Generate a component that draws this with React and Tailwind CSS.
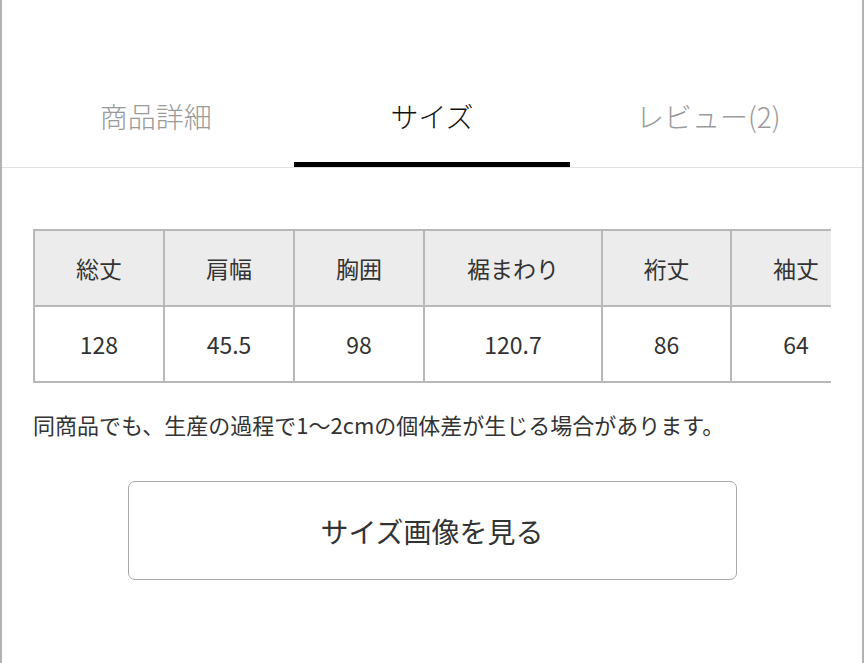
import React from "react";

const headers = ["総丈", "肩幅", "胸囲", "裾まわり", "裄丈", "袖丈"];
const values = ["128", "45.5", "98", "120.7", "86", "64"];
const widths = ["w-[130px]", "w-[130px]", "w-[130px]", "w-[178px]", "w-[129px]", "w-[130px]"];

export default function App() {
  return (
    <div
      className="w-[864px] h-[663px] bg-white border-x-2 border-[#b3b3b3] overflow-hidden"
      style={{ fontFamily: '"Noto Sans CJK JP", "Noto Sans", sans-serif' }}
    >
      <div className="h-[80px]" />
      <div className="flex px-[15.5px] border-b border-[#e2e2e2]">
        {["商品詳細", "サイズ", "レビュー(2)"].map((t, i) => (
          <div key={t} className="flex-1 flex flex-col items-center">
            <div
              className={
                "h-[82px] pb-[11px] flex items-center text-[28px] font-light leading-none " +
                (i === 1 ? "text-[#111]" : "text-[#9a9a9a]")
              }
            >
              {t}
            </div>
            <div className={"h-[5px] w-full " + (i === 1 ? "bg-black" : "")} />
          </div>
        ))}
      </div>
      <div className="pl-[31px] pr-[31px] pt-[61px]">
        <div className="overflow-hidden">
          <table className="border-collapse table-fixed w-[827px] text-[23px] text-[#333]">
            <thead>
              <tr className="h-[76px] bg-[#ececec]">
                {headers.map((h, i) => (
                  <th key={h} className={"border-2 border-[#b8b8b8] font-normal text-center " + widths[i]}>
                    {h}
                  </th>
                ))}
              </tr>
            </thead>
            <tbody>
              <tr className="h-[76px]">
                {values.map((v) => (
                  <td key={v} className="border-2 border-[#b8b8b8] text-center">
                    {v}
                  </td>
                ))}
              </tr>
            </tbody>
          </table>
        </div>
        <p className="mt-[30px] text-[22px] leading-none text-[#333] whitespace-nowrap">
          同商品でも、生産の過程で1〜2cmの個体差が生じる場合があります。
        </p>
      </div>
      <div className="flex justify-center pt-[46px]">
        <button className="w-[609px] h-[99px] border-[1.5px] border-[#a8a8a8] rounded-[7px] text-[28px] text-[#333] bg-white">
          サイズ画像を見る
        </button>
      </div>
    </div>
  );
}
